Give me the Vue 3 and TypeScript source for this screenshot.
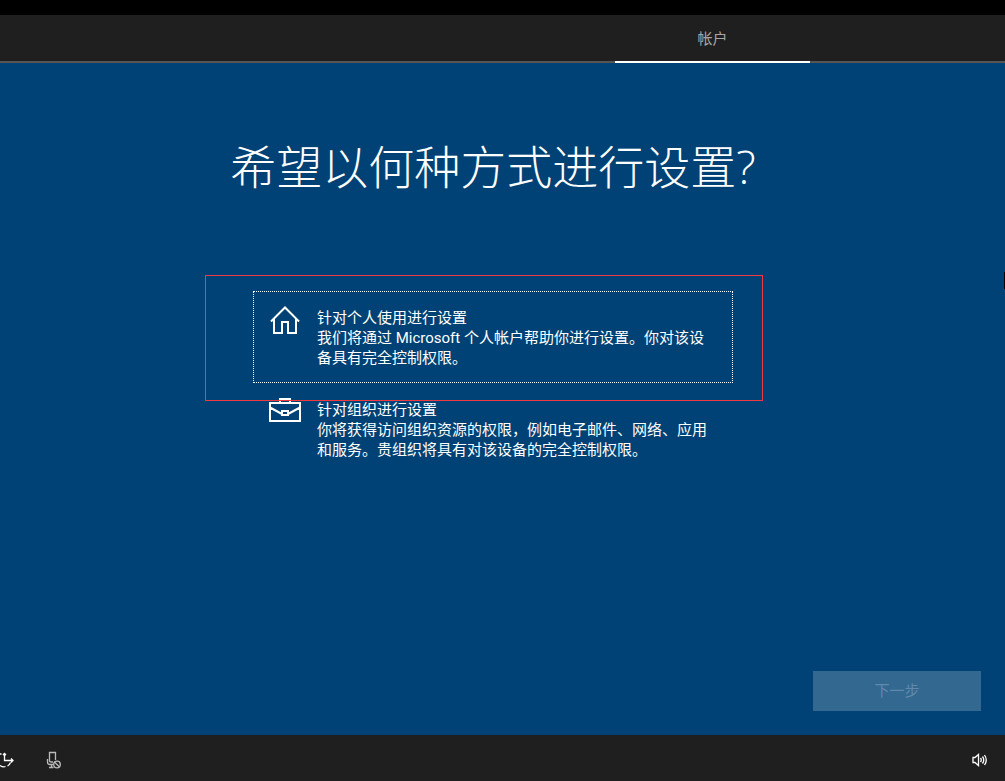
<script setup lang="ts">
import { ref } from 'vue'

interface SetupOption {
  id: 'personal' | 'organization'
  title: string
  description: string
}

const options: SetupOption[] = [
  {
    id: 'personal',
    title: '针对个人使用进行设置',
    description: '我们将通过 Microsoft 个人帐户帮助你进行设置。你对该设备具有完全控制权限。',
  },
  {
    id: 'organization',
    title: '针对组织进行设置',
    description: '你将获得访问组织资源的权限，例如电子邮件、网络、应用和服务。贵组织将具有对该设备的完全控制权限。',
  },
]

const focused = ref<SetupOption['id']>('personal')
</script>

<template>
  <div class="screen">
    <header class="topbar">
      <nav class="tabs">
        <a class="tab" href="#account" aria-current="step">帐户</a>
      </nav>
    </header>

    <main class="content">
      <h1 class="title">希望以何种方式进行设置?</h1>

      <div class="choices">
        <button
          v-for="option in options"
          :key="option.id"
          type="button"
          class="option"
          :class="{ focused: focused === option.id }"
          @click="focused = option.id"
        >
          <svg v-if="option.id === 'personal'" class="option-icon" viewBox="0 0 32 32" aria-hidden="true">
            <path d="M2 17.500 16 3.500 30 17.500M5 15V29H13V18H19V29H27V15" />
          </svg>
          <svg v-else class="option-icon" viewBox="0 0 32 32" aria-hidden="true">
            <path d="M1 7H31V25H1ZM11 7V3H21V7M1 11.500 13 18M31 11.500 19 18M13 15H19V19H13Z" />
          </svg>
          <span class="option-text">
            <span class="option-line">{{ option.title }}</span>
            <span class="option-line">{{ option.description }}</span>
          </span>
        </button>
        <div class="highlight" aria-hidden="true"></div>
      </div>

      <div class="actions">
        <button type="button" class="next" disabled>下一步</button>
      </div>
      <div class="edge-mark" aria-hidden="true"></div>
    </main>

    <footer class="bottombar">
      <button type="button" class="tool" aria-label="轻松使用">
        <svg width="16" height="20" viewBox="0 0 16 20" aria-hidden="true">
          <path d="M0 4H1.500M4.500 3V10.500H12.500M3 5 4.500 3.500 6 5M11 8.500 13 10.500 11 12.500M10.500 12.500Q9.500 15 7.500 16M5.500 16.500Q3 17.500 0 15.500" />
        </svg>
      </button>
      <button type="button" class="tool mic" aria-label="麦克风已关闭">
        <svg width="18" height="20" viewBox="0 0 18 20" aria-hidden="true">
          <path d="M8 12H6Q4.500 12 4.500 10.500V2.500H10.500V10M2.500 9V12Q2.500 14.500 5 14.500H8M6.500 14.500V17.500M4 17.500H8.500" />
          <circle cx="12" cy="14.500" r="3.300" />
          <path d="M9.700 12.200 14.300 16.800" />
        </svg>
      </button>
      <button type="button" class="tool volume" aria-label="音量">
        <svg width="18" height="20" viewBox="0 0 18 20" aria-hidden="true">
          <path d="M2 7.500H4L7.500 4.500V15.500L4 12.500H2Z" />
          <path d="M9.500 8Q11 10 9.500 12M11.500 6.500Q14 10 11.500 13.500M13.500 5Q17 10 13.500 15" />
        </svg>
      </button>
    </footer>
  </div>
</template>

<style>
body {
  margin: 0;
  background: #004275;
}
</style>

<style scoped>
.screen {
  display: flex;
  flex-direction: column;
  min-height: 100vh;
  background: #004275;
  color: #fff;
  font-family: Roboto, "Noto Sans CJK SC", sans-serif;
  font-size: 15px;
  line-height: 20px;
}

button {
  font: inherit;
  color: inherit;
  border: 0;
  border-radius: 0;
  background: none;
}

.topbar {
  border-top: 15px solid #000;
  background: #1f1f1f;
}

.tabs {
  display: flex;
  justify-content: flex-end;
  height: 48px;
  padding-right: 195px;
  box-shadow: inset 0 -2px #555;
}

.tab {
  display: flex;
  align-items: center;
  justify-content: center;
  box-sizing: border-box;
  width: 195px;
  padding-top: 2px;
  border-bottom: 2px solid #fff;
  color: #a6a6a6;
  text-decoration: none;
}

.content {
  position: relative;
  flex: 1;
  display: flex;
  flex-direction: column;
  align-items: center;
  padding: 71px 24px 24px 5px;
}

.title {
  margin: 0;
  font-family: "Open Sans", "Noto Sans CJK SC Light", "Noto Sans CJK SC", sans-serif;
  font-size: 46px;
  font-weight: 300;
  line-height: 64px;
}

.choices {
  position: relative;
  width: 480px;
  max-width: 100%;
  margin-top: 93px;
}

.option {
  display: flex;
  align-items: flex-start;
  gap: 16px;
  width: 100%;
  padding: 16px 15px 14px;
  border: 1px dotted transparent;
  text-align: left;
}

.option.focused {
  border-color: #fff;
  outline: none;
}

.option-icon {
  flex: none;
  width: 32px;
  height: 32px;
  margin-top: -4px;
  fill: none;
  stroke: #fff;
  stroke-width: 2;
}

.option-text {
  flex: 1;
  padding-right: 10px;
}

.option-line {
  display: block;
}

.highlight {
  position: absolute;
  top: -16px;
  left: -48px;
  right: -30px;
  height: 124px;
  border: 1px solid #f03a40;
  pointer-events: none;
}

.actions {
  align-self: flex-end;
  margin-top: auto;
}

.next {
  width: 168px;
  height: 40px;
  background: #336890;
  color: #6189ad;
}

.edge-mark {
  position: absolute;
  top: 209px;
  right: 0;
  width: 1px;
  height: 17px;
  background: #000;
}

.bottombar {
  display: flex;
  align-items: center;
  height: 46px;
  padding-right: 16px;
  background: #1f1f1f;
}

.tool {
  display: flex;
  padding: 4px 0 0;
}

.tool svg {
  fill: none;
  stroke: #fff;
  stroke-width: 1.3;
}

.mic {
  margin-left: 29px;
}

.mic svg {
  stroke: #bbb;
}

.volume {
  margin-left: auto;
}
</style>
